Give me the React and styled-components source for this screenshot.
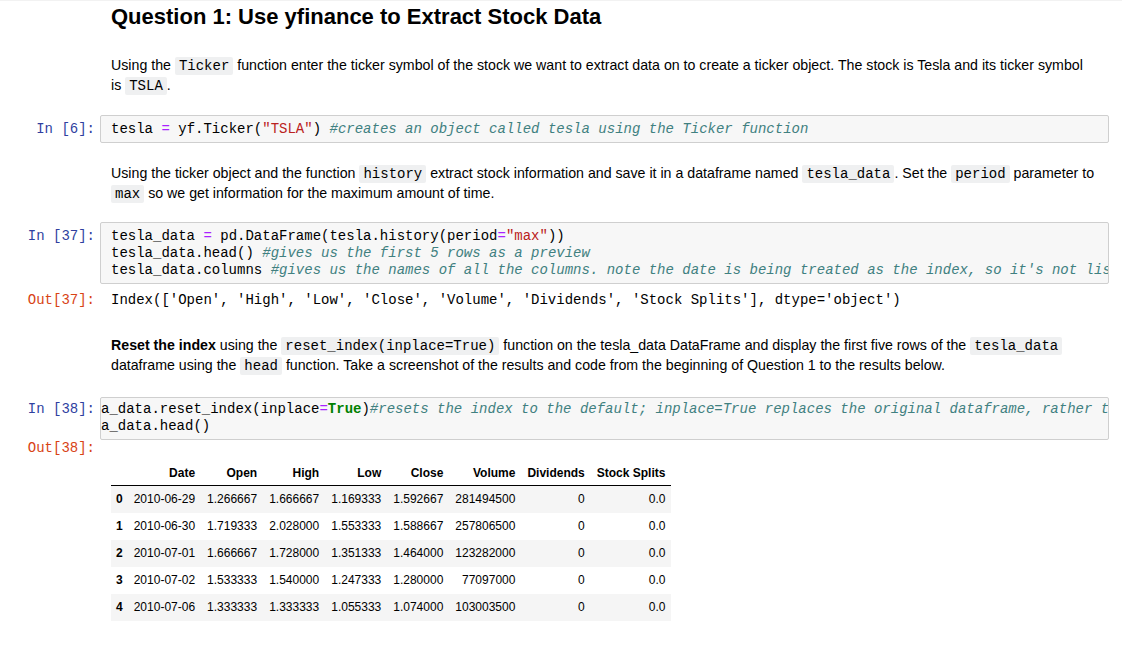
import React from "react";
import styled, { createGlobalStyle } from "styled-components";

const GlobalStyle = createGlobalStyle`
  body {
    margin: 0;
    background: #fff;
    font-family: "Liberation Sans", Arial, sans-serif;
    color: #000;
  }
`;

const MONO = `"Liberation Mono", "Courier New", monospace`;

const Notebook = styled.div`
  width: 1122px;
  height: 650px;
  overflow: hidden;
  border-top: 1px solid #f2f2f2;
  box-sizing: border-box;
  padding-right: 13px;
`;

const Row = styled.div`
  display: flex;
  align-items: flex-start;
  margin-top: ${(p) => p.$top || 0}px;
`;

const Prompt = styled.div`
  flex: 0 0 100px;
  box-sizing: border-box;
  padding-right: 5px;
  text-align: right;
  font-family: ${MONO};
  font-size: 14px;
  line-height: 17px;
  color: ${(p) => (p.$out ? "#D84315" : "#303F9F")};
  padding-top: ${(p) => p.$pad || 0}px;
  white-space: pre;
`;

const Markdown = styled.div`
  flex: 1;
  padding-left: 11px;
  font-size: 14.2px;
  line-height: 20px;
`;

const Heading = styled.h1`
  margin: 0;
  font-size: 22px;
  line-height: 26px;
  font-weight: bold;
`;

const Para = styled.p`
  margin: 0;
  height: 20px;
  white-space: nowrap;
`;

const InlineCode = styled.code`
  font-family: ${MONO};
  font-size: 14px;
  line-height: 14px;
  background: #eff0f1;
  padding: 1px 4px;
  border-radius: 2px;
`;

const CodeBox = styled.div`
  flex: 1;
  min-width: 0;
  overflow: hidden;
  background: #f7f7f7;
  border: 1px solid #cfcfcf;
  border-radius: 2px;
  padding: ${(p) => (p.$scrolled ? "3px 0 4px 0" : "5px 0 4px 10px")};
`;

const Pre = styled.pre`
  margin: 0;
  font-family: ${MONO};
  font-size: 14px;
  line-height: 17px;
  white-space: pre;
  color: #000;
`;

const Op = styled.span`
  color: #aa22ff;
`;
const Str = styled.span`
  color: #ba2121;
`;
const Comment = styled.span`
  color: #408080;
  font-style: italic;
`;
const Kw = styled.span`
  color: #008000;
  font-weight: bold;
`;

const Output = styled.div`
  flex: 1;
  padding-left: 11px;
`;

const Table = styled.table`
  margin-top: 20px;
  border-collapse: collapse;
  font-family: "Liberation Sans", Arial, sans-serif;
  font-size: 12px;
  color: #000;

  th,
  td {
    text-align: right;
    padding: 0 6px;
    white-space: nowrap;
  }
  thead th {
    height: 25px;
    border-bottom: 1px solid #000;
    font-weight: bold;
  }
  tbody tr {
    height: 27px;
  }
  tbody tr:nth-child(odd) {
    background: #f5f5f5;
  }
  tbody th {
    font-weight: bold;
    padding: 0 5px;
  }
`;

const columns = ["Date", "Open", "High", "Low", "Close", "Volume", "Dividends", "Stock Splits"];

const rows = [
  ["2010-06-29", "1.266667", "1.666667", "1.169333", "1.592667", "281494500", "0", "0.0"],
  ["2010-06-30", "1.719333", "2.028000", "1.553333", "1.588667", "257806500", "0", "0.0"],
  ["2010-07-01", "1.666667", "1.728000", "1.351333", "1.464000", "123282000", "0", "0.0"],
  ["2010-07-02", "1.533333", "1.540000", "1.247333", "1.280000", "77097000", "0", "0.0"],
  ["2010-07-06", "1.333333", "1.333333", "1.055333", "1.074000", "103003500", "0", "0.0"],
];

const DataFrame = () => (
  <Table>
    <thead>
      <tr>
        <th></th>
        {columns.map((c) => (
          <th key={c}>{c}</th>
        ))}
      </tr>
    </thead>
    <tbody>
      {rows.map((r, i) => (
        <tr key={i}>
          <th>{i}</th>
          {r.map((v, j) => (
            <td key={j}>{v}</td>
          ))}
        </tr>
      ))}
    </tbody>
  </Table>
);

export default function App() {
  return (
    <>
      <GlobalStyle />
      <Notebook>
        <Row $top={3}>
          <Prompt />
          <Markdown>
            <Heading>Question 1: Use yfinance to Extract Stock Data</Heading>
          </Markdown>
        </Row>

        <Row $top={25}>
          <Prompt />
          <Markdown>
            <Para>
              Using the <InlineCode>Ticker</InlineCode> function enter the ticker symbol of the stock we want to extract
              data on to create a ticker object. The stock is Tesla and its ticker symbol
            </Para>
            <Para>
              is <InlineCode>TSLA</InlineCode>.
            </Para>
          </Markdown>
        </Row>

        <Row $top={20}>
          <Prompt $pad={6}>In [6]:</Prompt>
          <CodeBox>
            <Pre>
              tesla <Op>=</Op> yf.Ticker(<Str>"TSLA"</Str>) <Comment>#creates an object called tesla using the Ticker function</Comment>
            </Pre>
          </CodeBox>
        </Row>

        <Row $top={20}>
          <Prompt />
          <Markdown>
            <Para>
              Using the ticker object and the function <InlineCode>history</InlineCode> extract stock information and
              save it in a dataframe named <InlineCode>tesla_data</InlineCode>. Set the <InlineCode>period</InlineCode>{" "}
              parameter to
            </Para>
            <Para>
              <InlineCode>max</InlineCode> so we get information for the maximum amount of time.
            </Para>
          </Markdown>
        </Row>

        <Row $top={19}>
          <Prompt $pad={6}>In [37]:</Prompt>
          <CodeBox>
            <Pre>
              tesla_data <Op>=</Op> pd.DataFrame(tesla.history(period<Op>=</Op>
              <Str>"max"</Str>)){"\n"}
              tesla_data.head() <Comment>#gives us the first 5 rows as a preview</Comment>
              {"\n"}
              tesla_data.columns{" "}
              <Comment>
                #gives us the names of all the columns. note the date is being treated as the index, so it's not
                listed as a column
              </Comment>
            </Pre>
          </CodeBox>
        </Row>

        <Row $top={8}>
          <Prompt $out>Out[37]:</Prompt>
          <Output>
            <Pre>Index(['Open', 'High', 'Low', 'Close', 'Volume', 'Dividends', 'Stock Splits'], dtype='object')</Pre>
          </Output>
        </Row>

        <Row $top={26}>
          <Prompt />
          <Markdown>
            <Para>
              <b>Reset the index</b> using the <InlineCode>reset_index(inplace=True)</InlineCode> function on the
              tesla_data DataFrame and display the first five rows of the <InlineCode>tesla_data</InlineCode>
            </Para>
            <Para>
              dataframe using the <InlineCode>head</InlineCode> function. Take a screenshot of the results and code from
              the beginning of Question 1 to the results below.
            </Para>
          </Markdown>
        </Row>

        <Row $top={22}>
          <Prompt $pad={4}>In [38]:</Prompt>
          <CodeBox $scrolled>
            <Pre>
              a_data.reset_index(inplace<Op>=</Op>
              <Kw>True</Kw>)
              <Comment>
                #resets the index to the default; inplace=True replaces the original dataframe, rather than creating a
                new one
              </Comment>
              {"\n"}a_data.head()
            </Pre>
          </CodeBox>
        </Row>

        <Row $top={0}>
          <Prompt $out>Out[38]:</Prompt>
          <Output>
            <DataFrame />
          </Output>
        </Row>
      </Notebook>
    </>
  );
}
